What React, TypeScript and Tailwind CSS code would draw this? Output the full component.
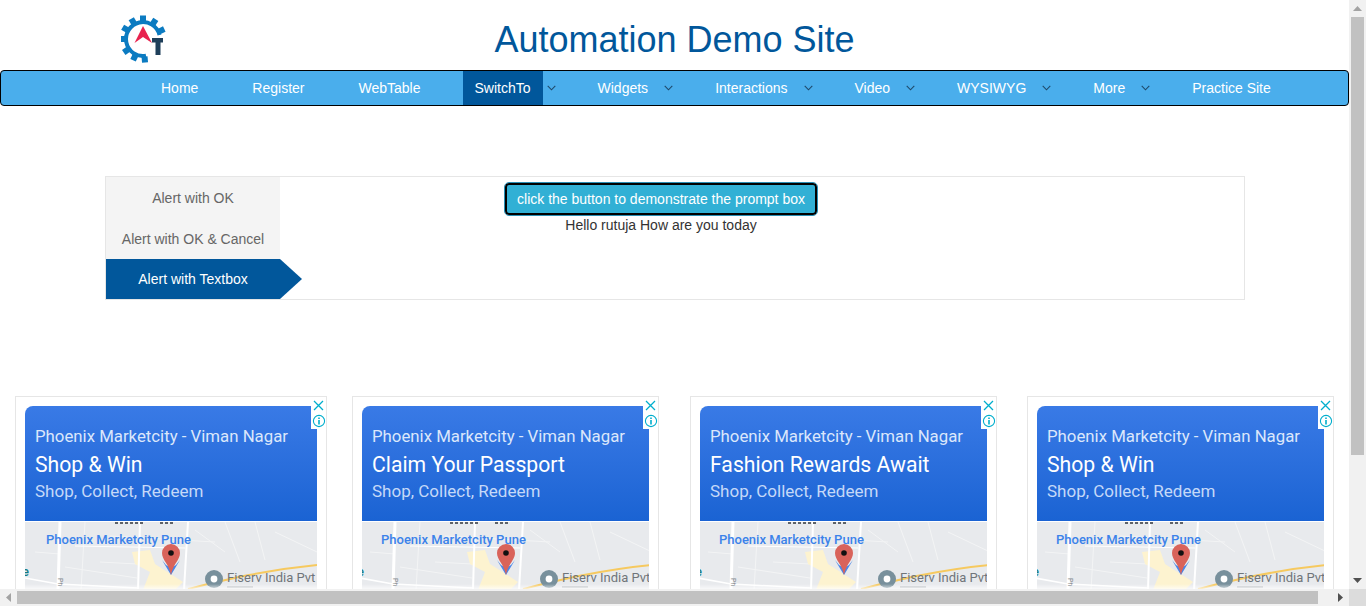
import React from 'react';

// top nav, in page order
const navItems = [
  { label: 'Home' },
  { label: 'Register' },
  { label: 'WebTable' },
  { label: 'SwitchTo', caret: true, active: true },
  { label: 'Widgets', caret: true },
  { label: 'Interactions', caret: true },
  { label: 'Video', caret: true },
  { label: 'WYSIWYG', caret: true },
  { label: 'More', caret: true },
  { label: 'Practice Site' },
];

const ads = [
  { title: 'Shop & Win', width: 'w-[312px]', gap: 'ml-[15px]' },
  { title: 'Claim Your Passport', width: 'w-[307px]', gap: 'ml-[25px]' },
  { title: 'Fashion Rewards Await', width: 'w-[307px]', gap: 'ml-[31px]' },
  { title: 'Shop & Win', width: 'w-[307px]', gap: 'ml-[30px]' },
];

function Logo() {
  const teeth = [0, 33, 65, -30, -60, -90, -125, -155, 175];
  return (
    <svg width="48" height="52" viewBox="0 0 48 52" className="ml-[121px] mt-[14px]">
      {teeth.map((a) => (
        <rect key={a} x="19" y="1.5" width="6" height="6" fill="#0b7bc1" transform={`rotate(${a} 22 25)`} />
      ))}
      <path d="M38.5 21 A17 17 0 1 0 25 41.8" fill="none" stroke="#0b7bc1" strokeWidth="4" />
      <path d="M22 12 L31 29 L22 23 L13.5 29 Z" fill="#e8234f" />
      <path d="M31 24 H42 V28.5 H39.5 V41 H34.5 V28.5 H31 Z" fill="#1f3f5a" />
    </svg>
  );
}

function NavBar() {
  return (
    <nav className="h-9 flex items-stretch pl-[148px] bg-[#4aaeec] border border-black rounded text-sm text-white">
      {navItems.map((item) => (
        <React.Fragment key={item.label}>
          <a className={`px-3 flex items-center ${item.active ? 'bg-[#01579b]' : ''}`}>{item.label}</a>
          {item.caret ? (
            <span className="w-[43px] pl-[4px] flex items-center">
              <svg width="9" height="6" viewBox="0 0 9 6" fill="none" stroke="#1f4a6b" strokeWidth="1.1">
                <path d="M0.7 0.8 L4.5 4.8 L8.3 0.8" />
              </svg>
            </span>
          ) : (
            <span className="w-[30px]" />
          )}
        </React.Fragment>
      ))}
    </nav>
  );
}

function AlertTabs() {
  return (
    <section className="ml-[105px] mt-[70px] w-[1140px] h-[124px] border border-[#e6e6e6] flex text-sm">
      <div className="w-[174px] bg-[#f4f4f4] text-[#666666] flex flex-col text-center">
        <div className="h-[41px] pt-[13px] leading-[16px]">Alert with OK</div>
        <div className="h-[41px] pt-[13px] leading-[16px]">Alert with OK &amp; Cancel</div>
        <div className="relative h-10 flex-1 bg-[#01579b] text-white flex items-center justify-center">
          Alert with Textbox
          <span className="absolute left-full top-0 border-y-[20px] border-y-transparent border-l-[22px] border-l-[#01579b]" />
        </div>
      </div>
      <div className="w-[762px] flex flex-col items-center pt-[6px] text-[#333333]">
        <button className="h-[32px] w-[312px] rounded-[4px] bg-[#31b0d5] text-white border-2 border-black outline outline-1 outline-[#2a8fb5]">
          click the button to demonstrate the prompt box
        </button>
        <p className="mt-[0px] leading-[20px]">Hello rutuja How are you today</p>
      </div>
    </section>
  );
}

function MapPreview() {
  return (
    <svg width="292" height="68" viewBox="0 0 292 68" className="shrink-0" style={{ fontFamily: 'Roboto, sans-serif' }}>
      <defs>
        <linearGradient id="mapFade" x1="0" y1="0" x2="0" y2="1">
          <stop offset="0" stopColor="#ffffff" stopOpacity="0" />
          <stop offset="1" stopColor="#ffffff" stopOpacity="0.85" />
        </linearGradient>
      </defs>
      <rect width="292" height="68" fill="#e8eaed" />
      <g stroke="#f3f4f5" fill="none" strokeWidth="1">
        <path d="M60 0 L56 68 M85 14 L190 20 M75 40 L112 42 M200 0 L215 40 M230 0 L240 38 M250 10 L292 30" />
        <path d="M10 30 L35 32 M40 45 L112 56 M170 8 L200 30" />
      </g>
      <path d="M107 30 L125 28 L130 42 L158 60 L150 68 L118 68 L125 50 L110 42 Z" fill="#fdf3d0" />
      <g stroke="#ffffff" fill="none">
        <path d="M35 0 L33 68" strokeWidth="3" />
        <path d="M115 0 L113 68" strokeWidth="2" />
        <path d="M163 0 L159 68" strokeWidth="2" />
        <path d="M0 56 L33 62 L113 66" strokeWidth="1.5" />
        <path d="M50 24 L160 26" strokeWidth="1" />
      </g>
      <path d="M163 67 C200 58 240 48 292 43" stroke="#f6c95f" strokeWidth="2" fill="none" />
      <path d="M90 1 H118 M135 1 H150" stroke="#5f6368" strokeWidth="2" strokeDasharray="3 2" />
      <text x="21" y="22" fontSize="13" fontWeight="500" fill="#3b82ea">Phoenix Marketcity Pune</text>
      <path d="M137 38 L146 53 L155 38 L151 43 L146 46 L141 43 Z" fill="#4a86e8" />
      <path d="M137 31 A9 9 0 1 1 155 31 C155 38 148 42 146 53 C144 42 137 38 137 31 Z" fill="#d9635a" />
      <circle cx="146" cy="31" r="2.8" fill="#111111" />
      <circle cx="189" cy="57" r="9" fill="#78909c" />
      <circle cx="189" cy="57" r="3.4" fill="#ffffff" />
      <text x="202" y="60" fontSize="13" fill="#70757a">Fiserv India Pvt</text>
      <path d="M202 65 H228" stroke="#9aa0a6" strokeWidth="1" />
      <text x="-3" y="54" fontSize="13" fontWeight="500" fill="#137c85">e</text>
      <text x="33" y="64" fontSize="7" fill="#80868b" transform="rotate(90 37 60)">Ph</text>
      <rect y="62" width="292" height="6" fill="url(#mapFade)" />
    </svg>
  );
}

function AdCard({ title, width, gap }: { title: string; width: string; gap: string }) {
  return (
    <article className={`relative shrink-0 h-[210px] border border-[#e6e6e6] p-[9px] ${width} ${gap}`}>
      <div className="rounded-tl-lg bg-gradient-to-b from-[#397ae6] to-[#1a63d3] h-[115px] pl-[10px] pt-[19px] text-white" style={{ fontFamily: 'Roboto, sans-serif' }}>
        <div className="text-[16.8px] leading-[22px] text-[#dbe7fb]">Phoenix Marketcity - Viman Nagar</div>
        <div className="text-[21.2px] leading-[28px] mt-[4px]">{title}</div>
        <div className="text-[17px] leading-[22px] mt-[1px] text-[#c5d9f8]">Shop, Collect, Redeem</div>
      </div>
      <div className="mt-px flex justify-center overflow-hidden">
        <MapPreview />
      </div>
      {/* adchoices style close / info */}
      <div className="absolute top-[2px] right-0 w-[15px] flex flex-col items-center bg-white text-[#00aecd]">
        <svg width="13" height="13" viewBox="0 0 13 13" stroke="currentColor" strokeWidth="1.3" fill="none">
          <path d="M2 2 L11 11 M11 2 L2 11" />
        </svg>
        <svg width="15" height="16" viewBox="0 0 15 16" stroke="currentColor" fill="none" className="mt-px">
          <circle cx="8" cy="8" r="5.6" strokeWidth="1.1" />
          <path d="M8 7 V11.5 M8 4.6 V6" strokeWidth="1.6" />
        </svg>
      </div>
    </article>
  );
}

function VerticalScrollbar() {
  return (
    <div className="bg-[#f1f1f1] flex flex-col items-center">
      <div className="h-[17px] flex items-center justify-center">
        <svg width="9" height="5" viewBox="0 0 9 5"><path d="M0 5 L4.5 0 L9 5 Z" fill="#a3a3a3" /></svg>
      </div>
      <div className="w-[13px] h-[438px] bg-[#c1c1c1]" />
      <div className="flex-1 flex items-end">
        <div className="h-[17px] flex items-center justify-center">
          <svg width="9" height="5" viewBox="0 0 9 5"><path d="M0 0 L4.5 5 L9 0 Z" fill="#505050" /></svg>
        </div>
      </div>
    </div>
  );
}

function HorizontalScrollbar() {
  return (
    <div className="bg-[#f1f1f1] flex items-center">
      <div className="w-[17px] flex justify-center">
        <svg width="5" height="9" viewBox="0 0 5 9"><path d="M5 0 L0 4.5 L5 9 Z" fill="#a3a3a3" /></svg>
      </div>
      <div className="w-[1301px] h-[13px] bg-[#c1c1c1]" />
      <div className="flex-1 flex justify-end">
        <div className="w-[17px] flex justify-center">
          <svg width="5" height="9" viewBox="0 0 5 9"><path d="M0 0 L5 4.5 L0 9 Z" fill="#505050" /></svg>
        </div>
      </div>
    </div>
  );
}

export default function App() {
  return (
    <div
      className="w-[1366px] h-[606px] overflow-hidden bg-white grid grid-cols-[1349px_17px] grid-rows-[589px_17px]"
      style={{ fontFamily: '"Liberation Sans", Arial, sans-serif' }}
    >
      <main className="overflow-hidden">
        <header className="h-[70px] grid grid-cols-[1fr_auto_1fr]">
          <Logo />
          <h1 className="text-[36px] leading-[40px] pt-[20px] text-[#01579b]">Automation Demo Site</h1>
        </header>
        <NavBar />
        <AlertTabs />
        <div className="flex mt-[96px]">
          {ads.map((ad, i) => (
            <AdCard key={i} title={ad.title} width={ad.width} gap={ad.gap} />
          ))}
        </div>
      </main>
      <VerticalScrollbar />
      <HorizontalScrollbar />
      <div className="bg-[#dcdcdc]" />
    </div>
  );
}
